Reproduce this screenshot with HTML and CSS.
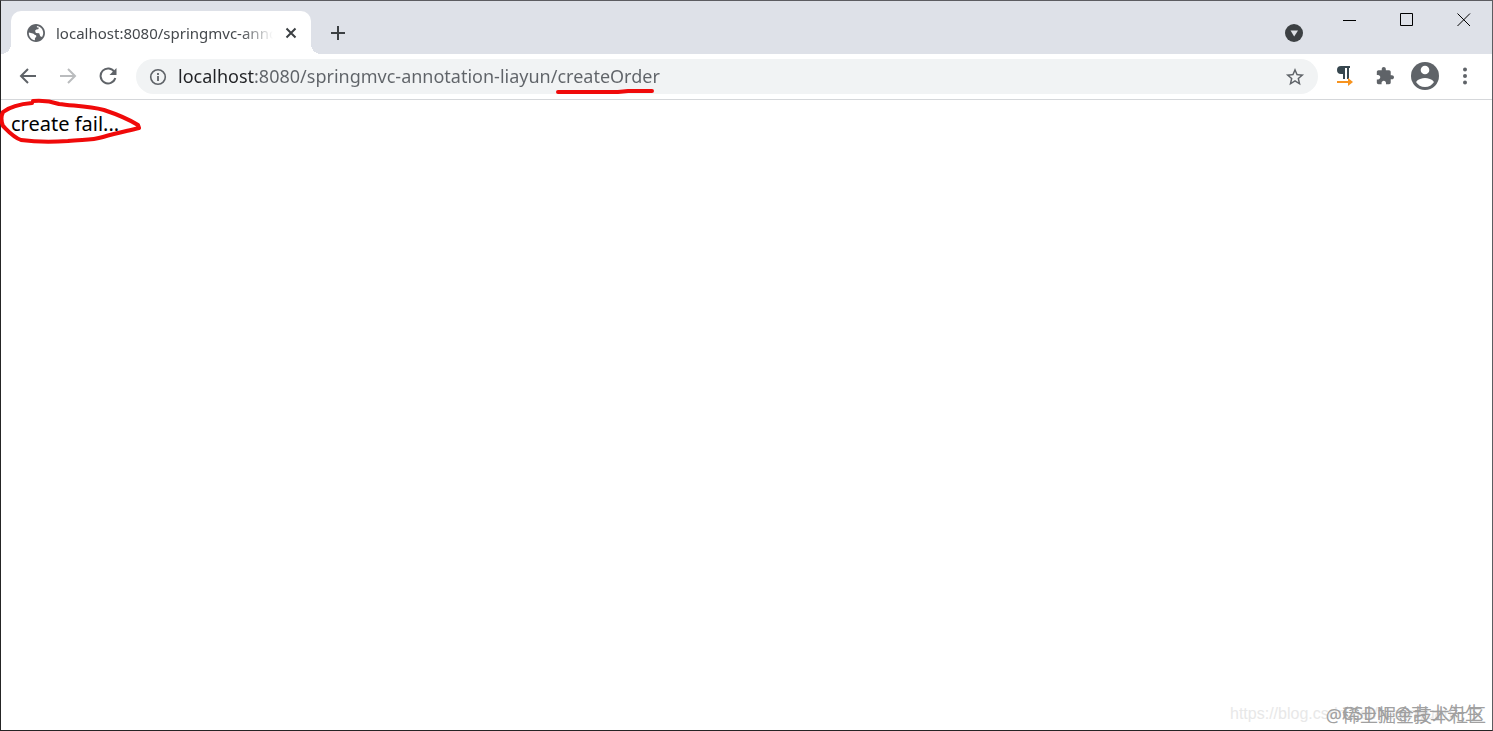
FILE: index.html
```html
<!DOCTYPE html>
<html lang="en">
<head>
    <meta charset="UTF-8">
    <meta name="viewport" content="width=device-width, initial-scale=1.0">
    <title>localhost:8080/springmvc-annotation-liayun/createOrder</title>
    <link rel="stylesheet" href="styles.css">
</head>
<body>

    <div class="window">
        <header class="titlebar">
            <div class="tab">
                <svg class="globe" width="18" height="18" viewBox="2 2 20 20"><path fill="#5f6368" d="M12 2C6.480 2 2 6.480 2 12s4.480 10 10 10 10-4.480 10-10S17.520 2 12 2z"/><path fill="#fff" d="M4.200 11.500l4.300 1c1.200.300 1.500 1.300 2.700 1.600 1.200.400 1.600 1.200.800 2.300l-1.200 1.500v2.100C6.900 19.500 4 16 4 12zM13 4.200c4 .600 7 3.800 7 7.800 0 1.600-.500 3.200-1.300 4.400l-2-.9-1.200-3.100-3.600-.5-1-2.300 1.500-1.500 2-.3 .900-1.500-2.300-.6z"/></svg>
                <span class="tab-title">localhost:8080/springmvc-annotation-liayun</span>
                <button class="tab-close" aria-label="Close tab">
                    <svg width="12" height="12" viewBox="0 0 12 12"><path d="M1.500 1.500l9 9M10.500 1.500l-9 9" stroke="#3c4043" stroke-width="2"/></svg>
                </button>
            </div>
            <button class="new-tab" aria-label="New tab">
                <svg width="16" height="16" viewBox="0 0 16 16"><path d="M8 1v14M1 8h14" stroke="#3c4043" stroke-width="2"/></svg>
            </button>
            <button class="tab-search" aria-label="Search tabs">
                <svg width="18" height="18" viewBox="0 0 18 18"><circle cx="9" cy="9" r="9" fill="#3c4043"/><path d="M5.500 6.500h7.500L9.200 12.500z" fill="#dee1e6"/></svg>
            </button>
            <div class="controls">
                <button aria-label="Minimize"><svg width="14" height="14" viewBox="0 0 14 14"><path d="M0 7.500h13" stroke="#000"/></svg></button>
                <button aria-label="Maximize"><svg width="14" height="14" viewBox="0 0 14 14"><path d="M.5.500h12v12H.5z" fill="none" stroke="#000"/></svg></button>
                <button aria-label="Close"><svg width="14" height="14" viewBox="0 0 14 14"><path d="M.5.500l12.500 12.500M13 .5L.5 13" stroke="#000"/></svg></button>
            </div>
        </header>

        <nav class="toolbar">
            <div class="nav-buttons">
                <button aria-label="Back"><svg width="18" height="18" viewBox="0 0 18 18"><path d="M17 9H2M9 2L2 9l7 7" fill="none" stroke="#5f6368" stroke-width="2"/></svg></button>
                <button aria-label="Forward"><svg width="18" height="18" viewBox="0 0 18 18"><path d="M1 9h15M9 2l7 7-7 7" fill="none" stroke="#babcbe" stroke-width="2"/></svg></button>
                <button aria-label="Reload"><svg width="18" height="18" viewBox="0 0 18 18"><path d="M15.500 5A7.500 7.500 0 1 0 16.300 11" fill="none" stroke="#5f6368" stroke-width="2"/><path d="M17.500 1v7h-7z" fill="#5f6368"/></svg></button>
            </div>
            <div class="omnibox">
                <svg width="18" height="18" viewBox="0 0 18 18"><circle cx="9" cy="9" r="7.300" fill="none" stroke="#5f6368" stroke-width="1.600"/><path d="M9 8v5M9 5v2" stroke="#5f6368" stroke-width="1.800"/></svg>
                <div class="address">
                    <input type="text" class="url" aria-label="Address" value="localhost:8080/springmvc-annotation-liayun/createOrder">
                    <svg class="underline" width="100" height="6" viewBox="0 0 100 6"><path d="M2 4h60l10-1h24" fill="none" stroke="#f00a0a" stroke-width="4" stroke-linecap="round"/></svg>
                </div>
                <button class="star" aria-label="Bookmark this page">
                    <svg width="20" height="20" viewBox="1 1 22 22"><path fill="#5f6368" d="M22 9.240l-7.190-.62L12 2 9.190 8.630 2 9.240l5.460 4.730L5.820 21 12 17.270 18.180 21l-1.630-7.030L22 9.240zM12 15.400l-3.760 2.270 1-4.280-3.320-2.880 4.380-.38L12 6.100l1.710 4.040 4.380.38-3.320 2.880 1 4.280L12 15.400z"/></svg>
                </button>
            </div>
            <div class="extensions">
                <button aria-label="Paragraph extension"><svg width="20" height="20" viewBox="0 0 20 20"><path fill="#37474f" d="M6 0h9v2h-1v11h-2V2h-2v11H8V8H6a4 4 0 0 1 0-8z"/><path d="M2 16h12" stroke="#f7931e" stroke-width="2"/><path d="M13 12l5 4-5 4z" fill="#f7931e"/></svg></button>
                <button aria-label="Extensions"><svg width="18" height="18" viewBox="1 1 22 22"><path fill="#5f6368" d="M20.500 11H19V7c0-1.100-.9-2-2-2h-4V3.500C13 2.120 11.880 1 10.500 1S8 2.120 8 3.500V5H4c-1.100 0-1.990.9-1.990 2v3.800H3.500c1.490 0 2.700 1.210 2.700 2.700s-1.210 2.700-2.700 2.700H2V20c0 1.100.9 2 2 2h3.800v-1.500c0-1.490 1.210-2.700 2.700-2.700 1.490 0 2.700 1.210 2.700 2.700V22H17c1.100 0 2-.9 2-2v-4h1.500c1.380 0 2.500-1.120 2.500-2.500S21.880 11 20.500 11z"/></svg></button>
                <button aria-label="Profile"><svg width="28" height="28" viewBox="0 0 28 28"><circle cx="14" cy="14" r="14" fill="#5f6368"/><circle cx="14" cy="8" r="4.300" fill="#fff"/><path d="M5 20c2-3 6-4 9-4s7 1 9 4c-2 3-5 5-9 5s-7-2-9-5z" fill="#fff"/></svg></button>
                <button aria-label="Menu"><svg width="18" height="18" viewBox="0 0 18 18"><g fill="#5f6368"><circle cx="9" cy="2.500" r="2"/><circle cx="9" cy="9" r="2"/><circle cx="9" cy="15.500" r="2"/></g></svg></button>
            </div>
        </nav>

        <main class="page">
            <p>create fail...</p>
            <svg class="circle-mark" width="144" height="48" viewBox="0 0 144 48"><path d="M32 2c11-1 17 0 26 3 14 2 29 2 45 6 15 5 26 10 34 15l1 3c-12 3-22 5-36 9-13 4-22 2-35 4-16 1-32 1-47-1-8-3-12-8-18-14-2-5-2-10 0-14 8-6 17-8 29-9" transform="translate(0 -1)" fill="none" stroke="#f00a0a" stroke-width="4" stroke-linecap="round" stroke-linejoin="round"/></svg>
            <div class="watermark blog">https://blog.csdn.net/yerenyuan</div>
            <div class="watermark csdn">CSDN @吉士先生</div>
            <div class="watermark juejin">@稀土掘金技术社区</div>
        </main>
    </div>

</body>
</html>
```

FILE: styles.css
```css
* {
    box-sizing: border-box;
}
body {
    margin: 0;
    font-family: "Noto Sans", "Noto Sans CJK SC", sans-serif;
    background: #fff;
}
button {
    display: flex;
    align-items: center;
    justify-content: center;
    padding: 0;
    border: none;
    background: none;
    cursor: pointer;
}
.window {
    display: flex;
    flex-direction: column;
    min-height: 100vh;
    border: 1px solid #5c5c61;
    border-left-color: #252525;
    border-bottom-color: #252525;
}
.titlebar {
    display: flex;
    height: 53px;
    padding: 10px 0 0 10px;
    background: #dee1e8;
}
.tab {
    position: relative;
    display: flex;
    align-items: center;
    width: 300px;
    padding: 0 12px 0 16px;
    background: #fff;
    border-radius: 10px 10px 0 0;
}
.tab::before,
.tab::after {
    content: "";
    position: absolute;
    bottom: 0;
    width: 10px;
    height: 10px;
}
.tab::before {
    right: 100%;
    background: radial-gradient(circle at 0 0, transparent 10px, #fff 10px);
}
.tab::after {
    left: 100%;
    background: radial-gradient(circle at 100% 0, transparent 10px, #fff 10px);
}
.globe {
    flex: none;
}
.tab-title {
    flex: 1;
    margin-left: 11px;
    overflow: hidden;
    white-space: nowrap;
    font-size: 15px;
    color: #45494d;
    -webkit-mask-image: linear-gradient(to left, transparent, #000 32px);
    mask-image: linear-gradient(to left, transparent, #000 32px);
}
.tab-close {
    width: 16px;
    margin-left: 10px;
}
.new-tab {
    width: 34px;
    margin-left: 10px;
}
.tab-search {
    width: 34px;
    margin-left: auto;
}
.controls {
    display: flex;
    margin: -10px 0 0 10px;
}
.controls button {
    width: 57px;
    height: 38px;
}
.toolbar {
    display: flex;
    align-items: center;
    height: 46px;
    padding: 0 7px;
    border-bottom: 1px solid #d5d7da;
}
.nav-buttons,
.extensions {
    display: flex;
}
.nav-buttons button,
.extensions button {
    width: 40px;
    height: 34px;
    padding-bottom: 2px;
}
.omnibox {
    flex: 1;
    display: flex;
    align-items: center;
    height: 35px;
    margin: 0 7px 0 8px;
    padding: 0 13px;
    border-radius: 18px;
    background: #f1f3f4;
}
.address {
    position: relative;
    flex: 1;
    margin-left: 11px;
}
.url {
    display: block;
    width: 100%;
    padding: 0 0 2px;
    border: none;
    outline: none;
    font-family: inherit;
    font-size: 18px;
    line-height: 24px;
    color: transparent;
    background: linear-gradient(to right, #202124 76px, #5f6368 76px);
    -webkit-background-clip: text;
    background-clip: text;
}
.underline {
    position: absolute;
    left: 378px;
    top: 24px;
}
.page {
    position: relative;
    flex: 1;
    padding: 8px 10px;
}
.page p {
    margin: 0;
    font-size: 20px;
    line-height: 32px;
    color: #000;
}
.circle-mark {
    position: absolute;
    left: 0;
    top: 0;
    overflow: visible;
}
.watermark {
    position: absolute;
    white-space: nowrap;
    line-height: 24px;
}
.blog {
    right: 8px;
    bottom: 4px;
    width: 254px;
    overflow: hidden;
    font-family: "Liberation Sans", sans-serif;
    font-size: 16px;
    color: #e8e8e8;
}
.csdn {
    right: 9px;
    bottom: 5px;
    font-size: 18px;
    color: #a0a0a0;
}
.juejin {
    right: 6px;
    bottom: 3px;
    font-size: 18px;
    color: #a0a0a0;
}
```
